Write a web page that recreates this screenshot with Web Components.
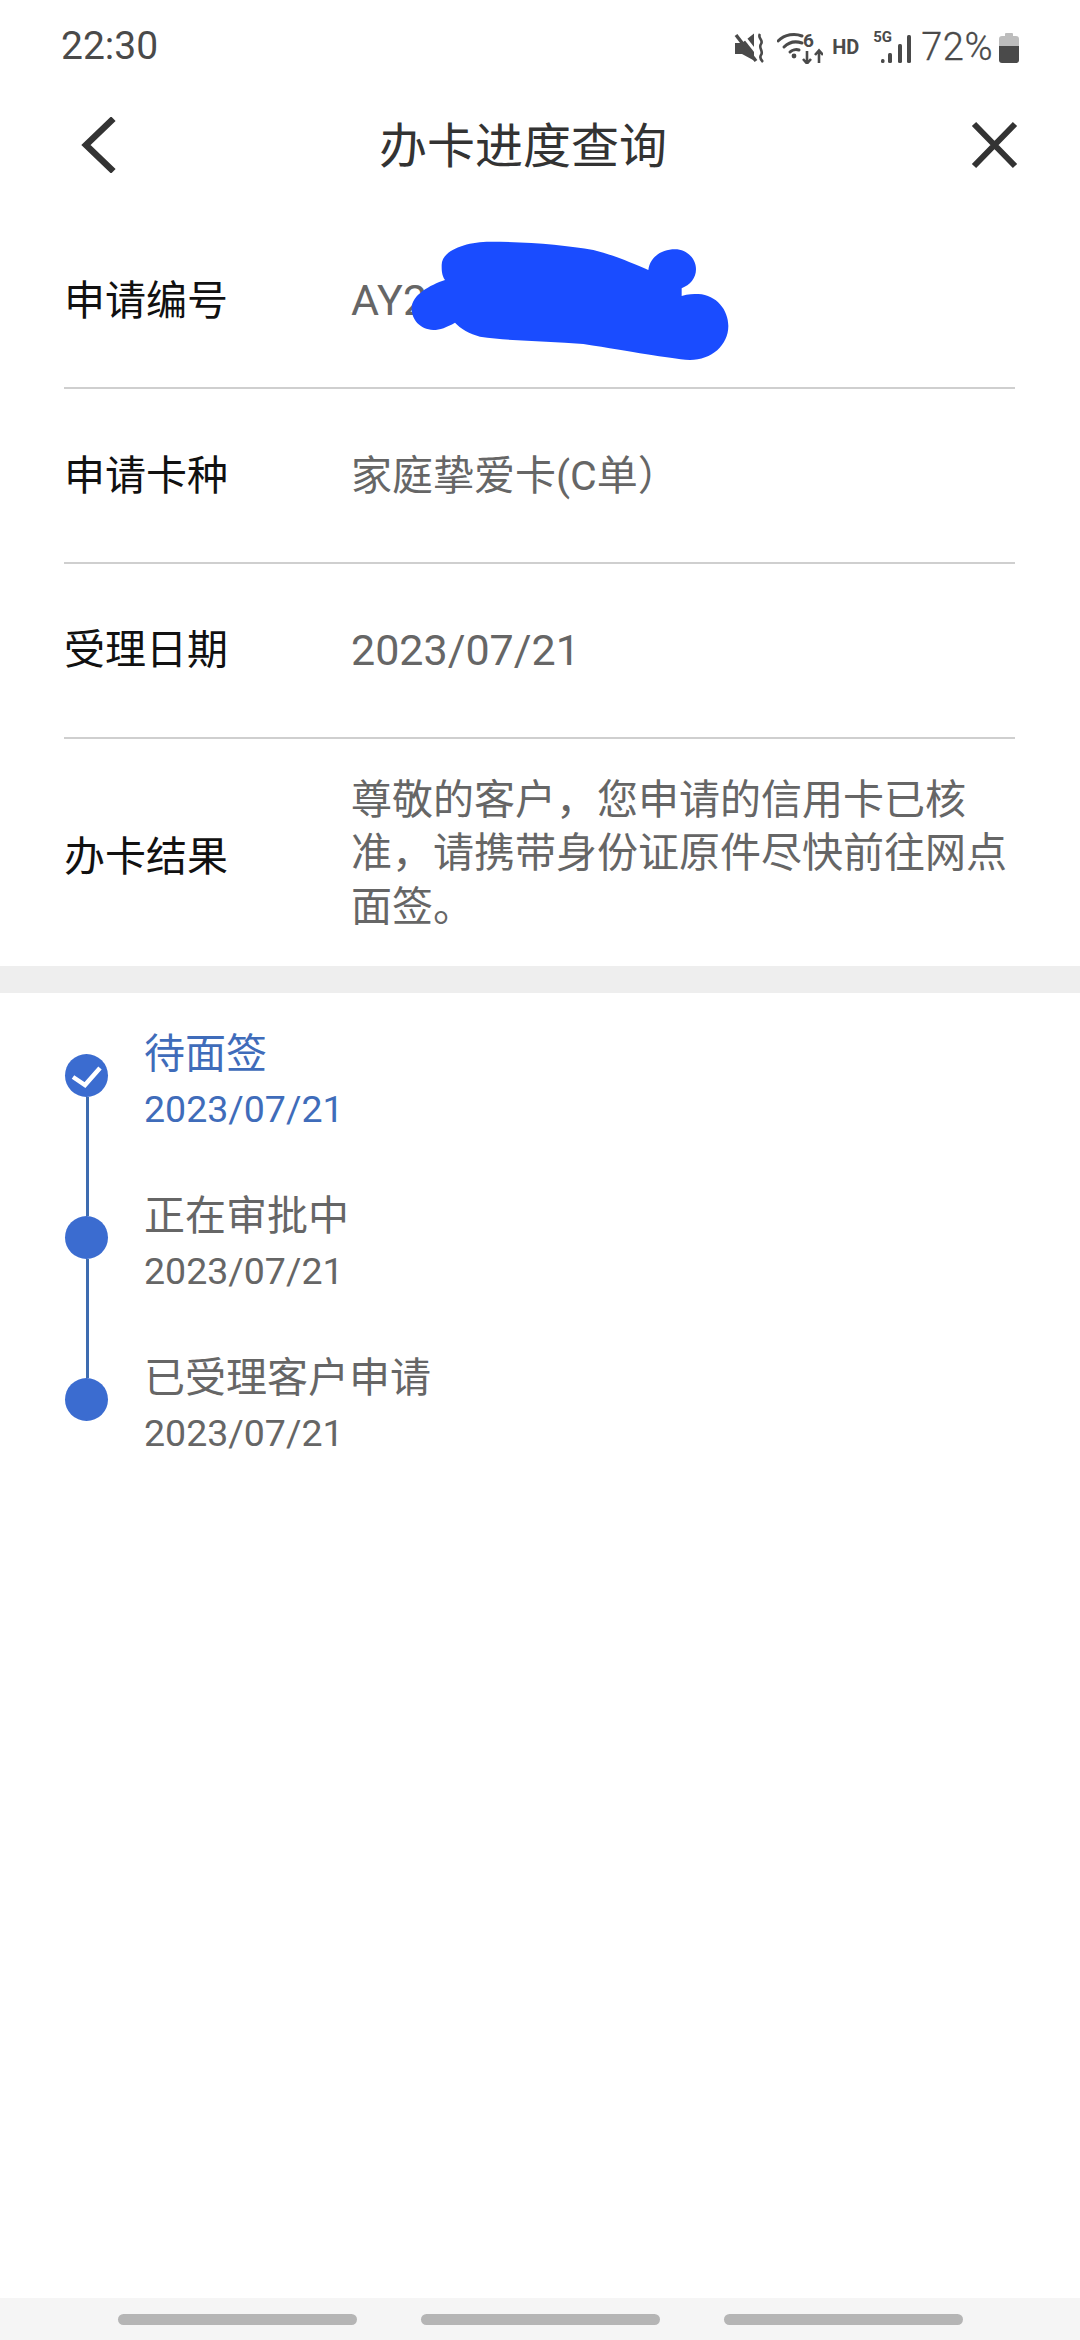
<!DOCTYPE html>
<html lang="zh-CN">
<head>
<meta charset="utf-8">
<title>办卡进度查询</title>
<style>
  html, body { margin: 0; padding: 0; background: #fff; }
  body {
    width: 1080px;
    height: 2340px;
    display: flex;
    flex-direction: column;
    font-family: Roboto, "Noto Sans CJK SC", sans-serif;
    overflow: hidden;
  }
</style>
</head>
<body>
  <status-bar></status-bar>
  <nav-bar>办卡进度查询</nav-bar>
  <info-list>
    <info-row label="申请编号" num><span>AY2</span><redact-mark></redact-mark></info-row>
    <info-row label="申请卡种">家庭挚爱卡(C单）</info-row>
    <info-row label="受理日期" num>2023/07/21</info-row>
    <info-row label="办卡结果" tall>尊敬的客户，您申请的信用卡已核准，请携带身份证原件尽快前往网点面签。</info-row>
  </info-list>
  <progress-list>
    <progress-step title="待面签" date="2023/07/21" current></progress-step>
    <progress-step title="正在审批中" date="2023/07/21"></progress-step>
    <progress-step title="已受理客户申请" date="2023/07/21" last></progress-step>
  </progress-list>
  <gesture-bar></gesture-bar>

<script>
/**
 * Small helper: every element gets an open shadow root with its own markup
 */
class ShadowElement extends HTMLElement {
  constructor() {
    super();
    this.attachShadow({ mode: 'open' });
  }

  connectedCallback() {
    this.shadowRoot.innerHTML = this.render();
  }
}

class StatusBar extends ShadowElement {
  render() {
    return `
      <style>
        :host {
          display: flex;
          flex: none;
          height: 76px;
          box-sizing: border-box;
          padding: 26px 60px 0 61px;
          justify-content: space-between;
          align-items: flex-start;
          color: #4a4a4a;
          font-family: Roboto, sans-serif;
        }
        .time { font-size: 39px; line-height: 40px; font-weight: 400; }
        .icons { display: flex; align-items: flex-start; }
        svg { display: block; flex: none; }
        .hd { font-size: 20px; line-height: 20px; font-weight: 700; margin: 11px 14px 0 9px; white-space: nowrap; }
        .five { width: 22px; margin: 4px -14px 0 0; font-size: 15px; line-height: 15px; font-weight: 700; white-space: nowrap; }
        .pct { font-size: 38px; line-height: 40px; font-weight: 300; margin: 1px 0 0 9px; letter-spacing: 0.5px; -webkit-text-stroke: 0.3px #4a4a4a; }
      </style>
      <div class="time">22:30</div>
      <div class="icons">
        <svg width="32" height="32" viewBox="0 0 32 32" style="margin-top:6px">
          <path d="M2 11 H9 L21 1.5 V28.5 L9 22 H2 Z" fill="#4a4a4a"/>
          <path d="M8 1 L27 25" stroke="#fff" stroke-width="3"/>
          <path d="M3 3 L23 29" stroke="#4a4a4a" stroke-width="3.4"/>
          <path d="M27 2 C24 6 31 8 28 12 C25 16 31 19 28 23 C26 26 28 28 30 30" fill="none" stroke="#4a4a4a" stroke-width="2.6"/>
        </svg>
        <svg width="46" height="38" viewBox="0 -6 46 38" style="margin-left:12px">
          <g fill="none" stroke="#4a4a4a" stroke-width="3" stroke-linecap="round">
            <path d="M1 9 C8 2 18 1 25 4"/>
            <path d="M7 15 C12 10 19 9 25 11"/>
            <path d="M13 20 C15 18 19 17 22 18"/>
          </g>
          <circle cx="17" cy="24" r="2.4" fill="#4a4a4a"/>
          <text x="26" y="15" font-family="Roboto, sans-serif" font-size="19" font-weight="700" fill="#4a4a4a">6</text>
          <path d="M30 19 V31 M26 27 L30 31.5 L34 27 M42 31 V19 M38 23 L42 18.5 L46 23" fill="none" stroke="#4a4a4a" stroke-width="2.6"/>
        </svg>
        <div class="hd">HD</div>
        <div class="five">5G</div>
        <svg width="31" height="34" viewBox="0 0 31 34" style="margin-top:6px">
          <g fill="#4a4a4a">
            <rect x="0" y="27" width="3.5" height="4" rx="1.5"/>
            <rect x="7" y="21" width="4" height="10" rx="1.5"/>
            <rect x="17" y="12" width="4" height="19" rx="1.5"/>
            <rect x="26" y="3" width="4" height="28" rx="1.5"/>
          </g>
        </svg>
        <div class="pct">72%</div>
        <svg width="22" height="32" viewBox="0 0 22 32" style="margin-left:5px;margin-top:6px">
          <path d="M7 2 Q7 1 8 1 H14 Q15 1 15 2 V4 H18 Q21 4 21 7 V14 H1 V7 Q1 4 4 4 H7 Z" fill="#bdbdbd"/>
          <path d="M1 14 H21 V28 Q21 31 18 31 H4 Q1 31 1 28 Z" fill="#4a4a4a"/>
        </svg>
      </div>
    `;
  }
}

class NavBar extends ShadowElement {
  render() {
    return `
      <style>
        :host {
          display: flex;
          flex: none;
          height: 138.5px;
          align-items: center;
          box-sizing: border-box;
          padding: 0 62px 0 80px;
          color: #333;
        }
        svg { display: block; flex: none; }
        .title {
          flex: 1;
          padding: 0 40px 7px 0;
          text-align: center;
          font-size: 48px;
          font-family: "Noto Sans CJK SC", sans-serif;
          line-height: 60px;
        }
      </style>
      <svg width="36" height="56" viewBox="0 0 36 56">
        <path d="M31 4 L6 28 L31 52" fill="none" stroke="#333" stroke-width="6.5" stroke-linecap="square"/>
      </svg>
      <div class="title"><slot></slot></div>
      <svg width="48" height="48" viewBox="0 0 48 48">
        <path d="M4 3 L45 45 M45 3 L4 45" fill="none" stroke="#333" stroke-width="6"/>
      </svg>
    `;
  }
}

class InfoList extends ShadowElement {
  render() {
    return `
      <style>
        :host {
          display: flex;
          flex: none;
          flex-direction: column;
          border-bottom: 27px solid #eeeeee;
        }
      </style>
      <slot></slot>
    `;
  }
}

class InfoRow extends ShadowElement {
  render() {
    const tall = this.hasAttribute('tall');
    const num = this.hasAttribute('num');
    return `
      <style>
        :host {
          display: flex;
          position: relative;
          align-items: center;
          box-sizing: border-box;
          height: ${tall ? 227 : 174.75}px;
          margin: 0 65px 0 64px;
          ${tall ? '' : 'border-bottom: 2px solid #cfcfcf;'}
          font-family: Roboto, "Noto Sans CJK SC", sans-serif;
        }
        .label {
          flex: none;
          width: 287px;
          font-size: 41px;
          color: #111;
          ${tall ? 'padding-top: 2px;' : 'padding-bottom: 8px;'}
        }
        .value {
          flex: 1;
          font-size: ${num ? 43 : 41}px;
          line-height: 53.5px;
          color: #666;
          padding-top: ${tall ? 3 : num ? 0 : 2}px;
        }
      </style>
      <div class="label">${this.getAttribute('label')}</div>
      <div class="value"><slot></slot></div>
    `;
  }
}

class RedactMark extends ShadowElement {
  render() {
    return `
      <style>
        :host { display: block; position: absolute; left: 236px; top: 5.5px; width: 460px; height: 160px; }
        svg { display: block; }
      </style>
      <svg width="460" height="160" viewBox="0 0 1380 480">
        <path fill="#1a4cff" d="M425 135 C425 90 500 65 570 65 C680 65 800 75 880 90 C940 105 1000 130 1045 150 C1050 110 1085 88 1125 88 C1160 88 1188 115 1188 148 C1188 175 1170 195 1145 205 L1145 228 C1165 222 1180 222 1195 222 C1250 225 1285 270 1285 318 C1285 375 1235 420 1170 420 C1100 415 1000 395 850 372 C750 362 640 365 540 350 C510 342 480 325 465 308 C440 322 420 330 400 330 C360 328 335 300 335 265 C335 225 390 195 435 180 C425 165 425 150 425 135 Z"/>
      </svg>
    `;
  }
}

class ProgressList extends ShadowElement {
  render() {
    return `
      <style>
        :host {
          display: flex;
          flex: 1;
          flex-direction: column;
          padding: 61px 0 0 65px;
        }
      </style>
      <slot></slot>
    `;
  }
}

class ProgressStep extends ShadowElement {
  render() {
    const current = this.hasAttribute('current');
    const last = this.hasAttribute('last');
    return `
      <style>
        :host {
          display: flex;
          height: 162px;
          color: ${current ? '#3f6cba' : '#666'};
          font-family: Roboto, "Noto Sans CJK SC", sans-serif;
        }
        .marker { flex: none; width: 43px; display: flex; flex-direction: column; align-items: center; margin-right: 36px; }
        .dot { flex: none; width: 43px; height: 43px; border-radius: 50%; background: #3b6cd0; }
        .dot svg { display: block; }
        .line { flex: 1; width: 3px; background: #3e6cb0; margin-left: 2px; }
        .text { margin-top: -26px; }
        .title { font-size: 41px; line-height: 52px; white-space: nowrap; }
        .date { font-size: 37.5px; line-height: 42px; margin-top: 8px; }
      </style>
      <div class="marker">
        <div class="dot">
          ${current ? `<svg width="43" height="43" viewBox="0 0 43 43"><path d="M8 23 L20 31 L35 14" fill="none" stroke="#fff" stroke-width="4.5"/></svg>` : ''}
        </div>
        ${last ? '' : '<div class="line"></div>'}
      </div>
      <div class="text">
        <div class="title">${this.getAttribute('title')}</div>
        <div class="date">${this.getAttribute('date')}</div>
      </div>
    `;
  }
}

class GestureBar extends ShadowElement {
  render() {
    return `
      <style>
        :host {
          display: flex;
          flex: none;
          height: 42px;
          box-sizing: border-box;
          padding: 16px 117px 0 118px;
          background: #f5f5f5;
          justify-content: space-between;
          align-items: flex-start;
        }
        i { display: block; width: 239px; height: 11px; border-radius: 6px; background: #b5b5b5; }
      </style>
      <i></i><i></i><i></i>
    `;
  }
}

customElements.define('status-bar', StatusBar);
customElements.define('nav-bar', NavBar);
customElements.define('info-list', InfoList);
customElements.define('info-row', InfoRow);
customElements.define('redact-mark', RedactMark);
customElements.define('progress-list', ProgressList);
customElements.define('progress-step', ProgressStep);
customElements.define('gesture-bar', GestureBar);
</script>
</body>
</html>
